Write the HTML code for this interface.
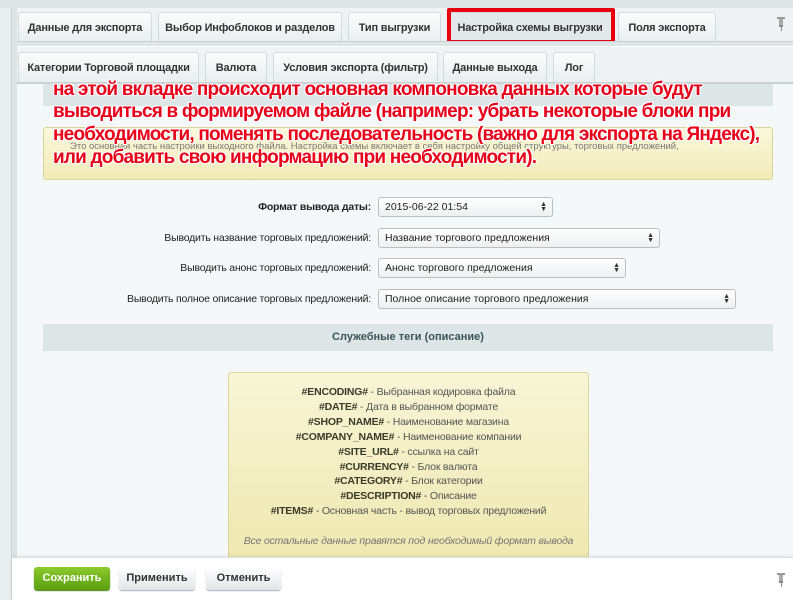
<!DOCTYPE html>
<html><head><meta charset="utf-8"><style>
*{box-sizing:border-box;margin:0;padding:0}
body{width:793px;height:600px;overflow:hidden;background:#e8eef0;font-family:"Liberation Sans",sans-serif;position:relative}
.abs{position:absolute}
.tab{position:absolute;height:31px;background:linear-gradient(#fbfcfc,#e9eeef);border:1px solid #d3dadc;border-bottom:none;border-radius:3px 3px 0 0;font-size:11px;font-weight:bold;color:#333;text-align:center;line-height:30px;letter-spacing:-0.2px}
.bar{position:absolute;left:17px;right:0;height:6px;background:#dfe6e8;border-top:1px solid #c9d1d4;border-bottom:1px solid #fff}
.lbl{position:absolute;font-size:10.5px;color:#222;text-align:right;right:422px;letter-spacing:-0.2px}
.sel{position:absolute;height:20px;border:1px solid #b9c0c3;border-radius:3px;background:linear-gradient(#fff,#eef0f1);font-size:10.5px;color:#222;line-height:18px;padding-left:6px}
.sel i{position:absolute;right:5px;top:4px;font-style:normal;font-size:7px;line-height:5px;color:#333}
.red{position:absolute;left:53px;font-size:19px;font-weight:bold;color:#e8001a;letter-spacing:-0.8px;white-space:nowrap;text-shadow:1px 1px 0 #fff,-1px -1px 0 #fff,1px -1px 0 #fff,-1px 1px 0 #fff}
.tags{font-size:10.5px;color:#555;text-align:center;line-height:14.9px;letter-spacing:-0.2px}
.tags b{color:#3a3a2a}
.btn{position:absolute;top:567px;height:23px;border-radius:3px;font-size:11px;font-weight:bold;line-height:23px;text-align:center;color:#333;background:linear-gradient(#fff,#dfe6e9);box-shadow:0 1px 1px #aab}
.pin{position:absolute;width:8px;height:14px}
.pin:before{content:"";position:absolute;left:0;top:0;width:8px;height:2px;background:#999}
.pin:after{content:"";position:absolute;left:2px;top:2px;width:4px;height:6px;background:#aaa;border-bottom:2px solid #888}
.pin i{position:absolute;left:3.5px;top:9px;width:1px;height:5px;background:#888}
</style></head><body>
<div class="abs" style="left:0;top:0;width:793px;height:8px;background:#dfe6e8"></div>
<div class="abs" style="left:11px;top:8px;width:6px;height:592px;background:#dde4e6;border-left:1px solid #c8d0d3"></div>
<div class="abs" style="left:17px;top:8px;right:0;height:76px;background:#eef2f3"></div>

<div class="tab" style="left:18px;top:12px;width:134px">Данные для экспорта</div>
<div class="tab" style="left:158px;top:12px;width:184px">Выбор Инфоблоков и разделов</div>
<div class="tab" style="left:348px;top:12px;width:93px">Тип выгрузки</div>
<div class="tab" style="left:448px;top:12px;width:164px;background:#e3e9ea">Настройка схемы выгрузки</div>
<div class="abs" style="left:447px;top:8px;width:168px;height:36px;border:4px solid #e8000f;border-radius:2px"></div>
<div class="tab" style="left:618px;top:12px;width:98px">Поля экспорта</div>
<div class="pin" style="left:777px;top:17px"><i></i></div>
<div class="bar" style="top:41px"></div>

<div class="tab" style="left:18px;top:52px;width:181px">Категории Торговой площадки</div>
<div class="tab" style="left:205px;top:52px;width:62px">Валюта</div>
<div class="tab" style="left:273px;top:52px;width:165px">Условия экспорта (фильтр)</div>
<div class="tab" style="left:443px;top:52px;width:104px">Данные выхода</div>
<div class="tab" style="left:553px;top:52px;width:42px">Лог</div>
<div class="abs" style="left:17px;top:82px;right:0;height:2px;background:#c9d1d4"></div>

<div class="abs" style="left:17px;top:84px;right:0;height:474px;background:#f5f8f9"></div>
<div class="abs" style="left:43px;top:84px;width:730px;height:22px;background:#dde5e6"></div>
<div class="abs" style="left:43px;top:127px;width:730px;height:53px;background:linear-gradient(#fbf8dc,#f1ebb8);border:1px solid #dcd39c;border-radius:3px"></div>
<div class="abs" style="left:70px;top:141px;font-size:9.5px;color:#777;white-space:nowrap">Это основная часть настройки выходного файла. Настройка схемы включает в себя настройку общей структуры, торговых предложений,</div>

<div class="red" style="top:79px">на этой вкладке происходит основная компоновка данных которые будут</div>
<div class="red" style="top:101px">выводиться в формируемом файле (например: убрать некоторые блоки при</div>
<div class="red" style="top:124px">необходимости, поменять последовательность (важно для экспорта на Яндекс),</div>
<div class="red" style="top:147px">или добавить свою информацию при необходимости).</div>

<div class="lbl" style="top:201px;font-weight:bold">Формат вывода даты:</div>
<div class="sel" style="left:378px;top:197px;width:175px">2015-06-22 01:54<i>▲<br>▼</i></div>
<div class="lbl" style="top:232px">Выводить название торговых предложений:</div>
<div class="sel" style="left:378px;top:228px;width:282px">Название торгового предложения<i>▲<br>▼</i></div>
<div class="lbl" style="top:262px">Выводить анонс торговых предложений:</div>
<div class="sel" style="left:378px;top:258px;width:248px">Анонс торгового предложения<i>▲<br>▼</i></div>
<div class="lbl" style="top:293px">Выводить полное описание торговых предложений:</div>
<div class="sel" style="left:378px;top:289px;width:358px">Полное описание торгового предложения<i>▲<br>▼</i></div>

<div class="abs" style="left:43px;top:324px;width:730px;height:27px;background:#dde5e6;font-size:11px;font-weight:bold;color:#3c5555;text-align:center;line-height:27px">Служебные теги (описание)</div>

<div class="abs tags" style="left:228px;top:372px;width:361px;height:190px;background:linear-gradient(#f8f5d6,#efe8b0);border:1px solid #ddd4a0;border-radius:3px;padding-top:12px">
<b>#ENCODING#</b> - Выбранная кодировка файла<br>
<b>#DATE#</b> - Дата в выбранном формате<br>
<b>#SHOP_NAME#</b> - Наименование магазина<br>
<b>#COMPANY_NAME#</b> - Наименование компании<br>
<b>#SITE_URL#</b> - ссылка на сайт<br>
<b>#CURRENCY#</b> - Блок валюта<br>
<b>#CATEGORY#</b> - Блок категории<br>
<b>#DESCRIPTION#</b> - Описание<br>
<b>#ITEMS#</b> - Основная часть - вывод торговых предложений<br>
<div style="margin-top:15px;font-style:italic;color:#777">Все остальные данные правятся под необходимый формат вывода</div>
</div>

<div class="abs" style="left:12px;top:557px;right:0;height:43px;background:#fff;border-top:1px solid #d8e0e2;box-shadow:0 -2px 3px rgba(0,0,0,0.06)"></div>
<div class="btn" style="left:34px;width:76px;color:#fff;background:linear-gradient(#8ccb2c,#5a9e10);box-shadow:0 1px 1px #4a7a10">Сохранить</div>
<div class="btn" style="left:119px;width:76px">Применить</div>
<div class="btn" style="left:206px;width:75px">Отменить</div>
<div class="pin" style="left:777px;top:573px"><i></i></div>
</body></html>
